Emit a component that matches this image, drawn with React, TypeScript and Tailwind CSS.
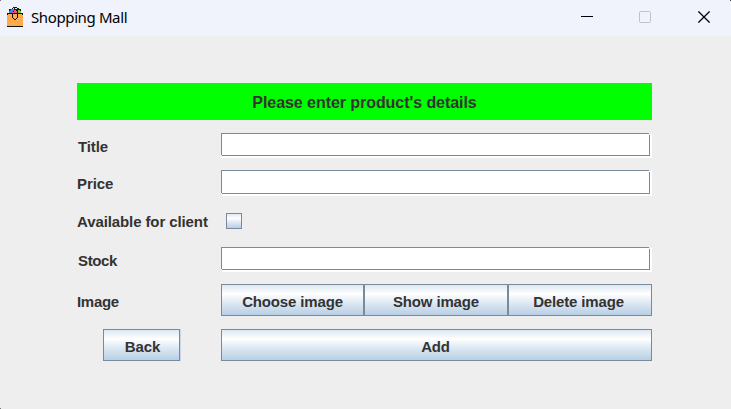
import type { ReactNode } from "react";

const SANS = "font-['Liberation_Sans',Arial,sans-serif]";
const METAL = "bg-[linear-gradient(to_bottom,#dde8f3_0%,#ffffff_30%,#dde8f3_60%,#b8cfe5_100%)]";

function BagIcon() {
  return (
    <svg width="16" height="20" viewBox="0 0 16 20" shapeRendering="crispEdges">
      <path d="M2 2h3V1h1V0h4v1h2v1h2v5H2z" fill="#1a1a1a" />
      <path d="M4 2h3v2H6v1H5v1H2V4h1V3h1z" fill="#2f86e8" />
      <path d="M7 3h2v1h1v2H5V5h2z" fill="#f0508c" />
      <path d="M8 1h2v1H8zM6 1h1v1H6z" fill="#e8eef5" />
      <path d="M11 3h2v1h1v2h-3z" fill="#6fd321" />
      <path d="M0 6h16v14H0z" fill="#111" />
      <path d="M1 7h14v1h1v11H0V8h1z" fill="#ffa94d" />
      <path d="M5 6h1v5H5zM10 6h1v5h-1zM6 11h1v1H6zM9 11h1v1H9zM7 12h2v1H7z" fill="#111" />
    </svg>
  );
}

function Label({ children, className = "" }: { children: ReactNode; className?: string }) {
  return (
    <span className={`w-36 shrink-0 text-[15px] leading-5 font-bold tracking-[-0.1px] whitespace-nowrap text-[#333] ${className}`}>
      {children}
    </span>
  );
}

function TextField({ className }: { className: string }) {
  return (
    <div className={`relative w-[431px] border-r-2 border-b-2 border-white bg-white ${className}`}>
      <div className="h-full w-full border border-[#7a8a99] bg-white" />
      {/* Metal-style etched corners */}
      <i className="absolute top-0 right-[-2px] h-px w-[3px] bg-[#eee]" />
      <i className="absolute top-px right-0 h-px w-px bg-[#eee]" />
      <i className="absolute bottom-0 left-0 h-px w-px bg-[#eee]" />
      <i className="absolute bottom-[-2px] left-0 h-0.5 w-px bg-[#eee]" />
    </div>
  );
}

function MetalButton({ children, className = "" }: { children: ReactNode; className?: string }) {
  return (
    <button
      className={`flex h-8 items-center justify-center border border-[#7a8a99] pt-[3px] text-[15px] leading-5 font-bold tracking-[-0.15px] whitespace-nowrap text-[#333] ${METAL} ${className}`}
    >
      {children}
    </button>
  );
}

export default function App() {
  return (
    <div className={`relative flex h-[409px] w-[731px] flex-col overflow-hidden bg-[#eee] ${SANS}`}>
      <header className="flex h-9 shrink-0 items-center bg-[#f0f3fb] pb-0.5 pl-[7px]">
        <BagIcon />
        <h1 className="ml-2 font-['Noto_Sans','Open_Sans',sans-serif] text-[15px] tracking-[-0.38px] text-black">Shopping Mall</h1>
        <div className="mr-[21px] ml-auto flex items-center gap-[46px]">
          <svg width="12" height="12" viewBox="0 0 12 12"><path d="M0 5.5h12" stroke="#000" /></svg>
          <svg width="12" height="12" viewBox="0 0 12 12"><rect x=".5" y=".5" width="11" height="11" rx="1" fill="none" stroke="#bfc2c7" /></svg>
          <svg className="ml-px" width="12" height="12" viewBox="0 0 12 12"><path d="M.4.4l11.2 11.2M11.6.4L.4 11.6" stroke="#000" strokeWidth="1.25" /></svg>
        </div>
      </header>
      <main className="ml-[77px] w-[575px] pt-[47px]">
        <h2 className="h-[37px] bg-[#0f0] pt-px text-center text-base leading-[37px] font-bold tracking-[-0.06px] text-[#333]">
          Please enter product's details
        </h2>
        <div className="mt-[13px] flex h-[25px] items-center">
          <Label className="pt-[3px] pl-px">Title</Label>
          <TextField className="h-[25px]" />
        </div>
        <div className="mt-3 flex h-[26px] items-center">
          <Label className="pt-[2px]">Price</Label>
          <TextField className="h-[26px]" />
        </div>
        <div className="mt-4 flex h-5 items-center">
          <Label>Available for client</Label>
          <div className={`mb-0.5 ml-[5px] h-4 w-4 border border-[#7a8a99] ${METAL}`} />
        </div>
        <div className="mt-[15px] flex h-[25px] items-center">
          <Label className="pt-[3px] pl-px tracking-[-0.35px]">Stock</Label>
          <TextField className="h-[25px]" />
        </div>
        <div className="mt-3 flex h-8 items-center">
          <Label className="pt-[3px] tracking-[-0.3px]">Image</Label>
          <MetalButton className="w-[143px]">Choose image</MetalButton>
          <MetalButton className="w-36">Show image</MetalButton>
          <MetalButton className="w-36 pr-[3px]">Delete image</MetalButton>
        </div>
        <div className="mt-[13px] flex">
          <div className="mr-10 ml-[26px] w-[78px] border-r border-[#c7d7e7]">
            <MetalButton className="w-full pl-0.5">Back</MetalButton>
          </div>
          <MetalButton className="w-[431px] pr-0.5">Add</MetalButton>
        </div>
      </main>
      <i className="absolute top-0 left-0 h-px w-px bg-[#777]" />
      <i className="absolute top-0 right-0 h-px w-px bg-[#445]" />
      <i className="absolute bottom-0 left-0 h-px w-px bg-[#777]" />
    </div>
  );
}
